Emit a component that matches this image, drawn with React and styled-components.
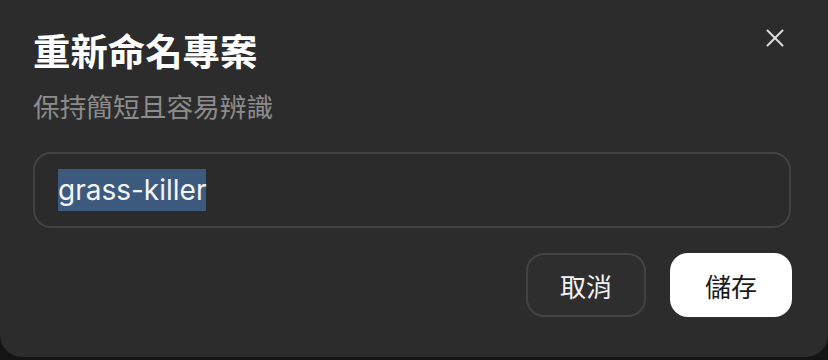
import React from "react";
import styled, { createGlobalStyle } from "styled-components";

const Global = createGlobalStyle`
  html, body { margin: 0; padding: 0; background: #141414; }
  body { width: 828px; height: 360px; overflow: hidden; }
  #root { width: 828px; height: 360px; }
`;

const cjk = `"Noto Sans CJK TC", "Noto Sans", sans-serif`;

const Dialog = styled.div`
  box-sizing: border-box;
  width: 828px;
  height: 357px;
  background: #2c2c2c;
  border-radius: 0 0 22px 22px;
  padding: 28px 37px 40px 33px;
  display: flex;
  flex-direction: column;
  font-family: ${cjk};
`;

const Header = styled.div`
  display: flex;
  justify-content: space-between;
  align-items: flex-start;
`;

const Titles = styled.div`
  display: flex;
  flex-direction: column;
  gap: 18px;
`;

const Title = styled.h2`
  margin: 0;
  font-size: 37.4px;
  line-height: 44px;
  font-weight: 700;
  color: #ffffff;
  letter-spacing: 0;
`;

const Subtitle = styled.p`
  margin: 0;
  font-size: 26.7px;
  line-height: 32px;
  color: #8c8c8c;
  font-weight: 400;
`;

const CloseButton = styled.button`
  width: 32px;
  height: 32px;
  margin-top: -6px;
  padding: 0;
  border: none;
  background: transparent;
  display: flex;
  align-items: center;
  justify-content: center;
  color: #dcdcdc;
`;

const Field = styled.div`
  box-sizing: border-box;
  margin-top: 30px;
  height: 76px;
  border: 2px solid #424242;
  border-radius: 18px;
  background: #2b2b2b;
  display: flex;
  align-items: center;
  padding-left: 23px;
`;

const Selected = styled.span`
  display: inline-block;
  height: 42px;
  line-height: 42px;
  background: #3c5a7e;
  color: #f4f4f4;
  font-family: Inter, "Liberation Sans", sans-serif;
  font-size: 28px;
  font-weight: 400;
`;

const Actions = styled.div`
  margin-top: 25px;
  display: flex;
  justify-content: flex-end;
  gap: 24px;
  margin-right: -1px;
`;

const Button = styled.button`
  box-sizing: border-box;
  width: ${(p) => (p.$primary ? "122px" : "120px")};
  height: 64px;
  border-radius: 18px;
  font-family: ${cjk};
  font-size: 26px;
  font-weight: 400;
  padding: 0;
  border: ${(p) => (p.$primary ? "none" : "2px solid #434343")};
  background: ${(p) => (p.$primary ? "#ffffff" : "#2e2e2e")};
  color: ${(p) => (p.$primary ? "#1a1a1a" : "#f2f2f2")};
`;

export default function App() {
  return (
    <>
      <Global />
      <Dialog>
        <Header>
          <Titles>
            <Title>重新命名專案</Title>
            <Subtitle>保持簡短且容易辨識</Subtitle>
          </Titles>
          <CloseButton aria-label="關閉">
            <svg width="18" height="18" viewBox="0 0 18 18" fill="none">
              <path d="M1.5 1.5L16.5 16.5M16.5 1.5L1.5 16.5" stroke="currentColor" strokeWidth="2" strokeLinecap="round" />
            </svg>
          </CloseButton>
        </Header>
        <Field>
          <Selected>grass-killer</Selected>
        </Field>
        <Actions>
          <Button>取消</Button>
          <Button $primary>儲存</Button>
        </Actions>
      </Dialog>
    </>
  );
}
